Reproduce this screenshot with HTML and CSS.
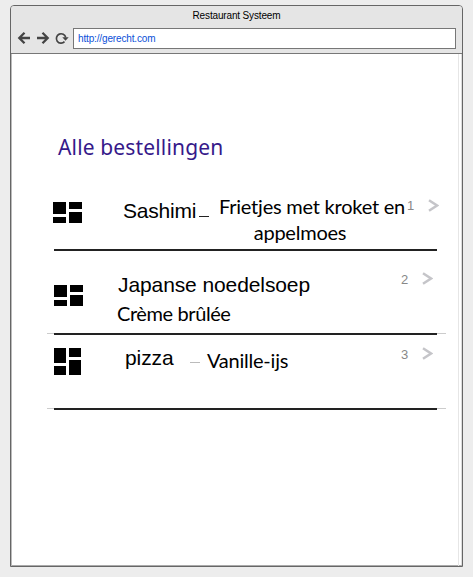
FILE: index.html
```html
<!DOCTYPE html>
<html lang="nl">
<head>
<meta charset="utf-8">
<title>Restaurant Systeem</title>
<link rel="stylesheet" href="styles.css">
</head>
<body>
<div class="window">
  <header class="chrome">
    <div class="title">Restaurant Systeem</div>
    <div class="toolbar">
      <svg class="nav" width="56" height="16" viewBox="0 0 56 16" fill="none" stroke="#444" stroke-width="2.3">
        <path d="M14 8H3.500M8.500 2.800L3.300 8l5.200 5.200"/>
        <path d="M21 8h10.500M26.500 2.800l5.200 5.200-5.200 5.200"/>
        <path d="M48.500 11.700A4.700 4.700 0 1 1 49.700 7.500" stroke-width="1.700"/>
        <path d="M46.300 7.300h6.400l-3.200 3.500z" fill="#444" stroke="none"/>
      </svg>
      <div class="address">http://gerecht.com</div>
    </div>
  </header>
  <main class="page">
    <h1 class="heading">Alle bestellingen</h1>
    <section class="order first">
      <svg class="tiles" width="29" height="21" viewBox="0 0 29 21"><path d="M0 0h13v12H0zM16 0h13v7H16zM0 15h13v6H0zM16 10h13v11H16z"/></svg>
      <div class="dish">Sashimi</div>
      <div class="dash"></div>
      <div class="side">Frietjes met kroket en<div class="wrapped">appelmoes</div></div>
      <div class="count">1</div>
      <svg class="chevron" width="11" height="13" viewBox="0 0 11 13"><path d="M1 1.200l8 5.300-8 5.300"/></svg>
    </section>
    <section class="order second">
      <svg class="tiles" width="29" height="21" viewBox="0 0 29 21"><path d="M0 0h13v12H0zM16 0h13v7H16zM0 15h13v6H0zM16 10h13v11H16z"/></svg>
      <div class="stack">
        <div class="dish">Japanse noedelsoep</div>
        <div class="side">Crème brûlée</div>
      </div>
      <div class="count">2</div>
      <svg class="chevron" width="11" height="13" viewBox="0 0 11 13"><path d="M1 1.200l8 5.300-8 5.300"/></svg>
    </section>
    <section class="order third">
      <svg class="tiles" width="27" height="27" viewBox="0 0 27 27"><path d="M0 0h12v15H0zM15 0h12v9H15zM0 18h12v9H0zM15 12h12v15H15z"/></svg>
      <div class="dish">pizza</div>
      <div class="dash"></div>
      <div class="side">Vanille-ijs</div>
      <div class="count">3</div>
      <svg class="chevron" width="11" height="13" viewBox="0 0 11 13"><path d="M1 1.200l8 5.300-8 5.300"/></svg>
    </section>
  </main>
</div>
</body>
</html>
```
FILE: styles.css
```css
* { box-sizing: border-box; }

body {
  margin: 0;
  padding: 5px 0 0 10px;
  background: #ededed;
  font-family: "Liberation Sans", Arial, sans-serif;
  color: #000;
}

.window {
  width: 453px;
  height: 562px;
  background: #fff;
  border: 1px solid #666;
  border-radius: 4px 4px 0 0;
  box-shadow: inset 1px 0 #bbb, inset 0 -1px #aaa, inset -1px 0 #ddd;
  overflow: hidden;
}

.chrome {
  height: 48px;
  background: #e5e5e5;
  border-bottom: 1px solid #777;
}

.title {
  height: 22px;
  line-height: 20px;
  font-size: 10px;
  letter-spacing: -0.15px;
  text-align: center;
}

.toolbar { display: flex; }

.nav { margin: 2px 0 0 5px; }

.address {
  width: 383px;
  height: 21px;
  margin-left: 1px;
  padding-left: 4px;
  border: 1px solid #777;
  background: #fff;
  color: #0b50d8;
  font-size: 10px;
  letter-spacing: -0.15px;
  line-height: 20px;
}

.page {
  width: 448px;
  height: 512px;
  border-right: 1px solid #e6e6e6;
  padding: 77px 17px 0 43px;
}

.heading {
  margin: 0 0 20px 4px;
  height: 32px;
  font: 400 21px/32px "Noto Sans", sans-serif;
  letter-spacing: 0.15px;
  color: #36198a;
  white-space: nowrap;
}

.order {
  position: relative;
  isolation: isolate;
  display: flex;
  align-items: flex-start;
  width: 383px;
  border-bottom: 2px solid #222;
  white-space: nowrap;
}

.order > * { flex: none; }

.second::before, .third::before {
  content: "";
  position: absolute;
  left: -7px;
  right: -9px;
  bottom: -1px;
  height: 1px;
  background: linear-gradient(to right, #ccc 7px, transparent 7px calc(100% - 9px), #ccc calc(100% - 9px));
}

.dish { font-size: 21px; line-height: 24px; letter-spacing: -0.1px; }

.side {
  font: 20px/26px Lato, "Open Sans", sans-serif;
  letter-spacing: -0.23px;
}

.wrapped { margin-left: -24px; }

.count {
  font-size: 13px;
  line-height: 15px;
  color: #888;
}

.chevron {
  fill: none;
  stroke: #c5c5c9;
  stroke-width: 2.5;
}

.dash { width: 10px; height: 1px; background: #222; }

.first { height: 68px; }
.first .tiles { margin: 19px 0 0 -1px; }
.first .dish { width: 76px; margin: 16px 0 0 41px; letter-spacing: -0.2px; }
.first .dash { margin-top: 33px; }
.first .side { width: 188px; margin: 10px 0 0 9px; text-align: center; }
.first .count { margin: 15px 0 0 1px; }
.first .chevron { margin: 16px 0 0 14px; }

.second { height: 84px; }
.second .tiles { margin-top: 34px; }
.second .stack { width: 283px; margin: 22px 0 0 35px; }
.second .side { margin: 3px 0 0 -1px; letter-spacing: -0.4px; }
.second .count { margin-top: 21px; }
.second .chevron { margin: 21px 0 0 14px; }

.third { height: 75px; }
.third .tiles { margin-top: 13px; }
.third .dish { width: 65px; margin: 11px 0 0 44px; }
.third .dash { margin-top: 27px; background: #bbb; }
.third .side { width: 194px; margin: 12px 0 0 7px; }
.third .count { margin-top: 12px; }
.third .chevron { margin: 12px 0 0 14px; }
```
